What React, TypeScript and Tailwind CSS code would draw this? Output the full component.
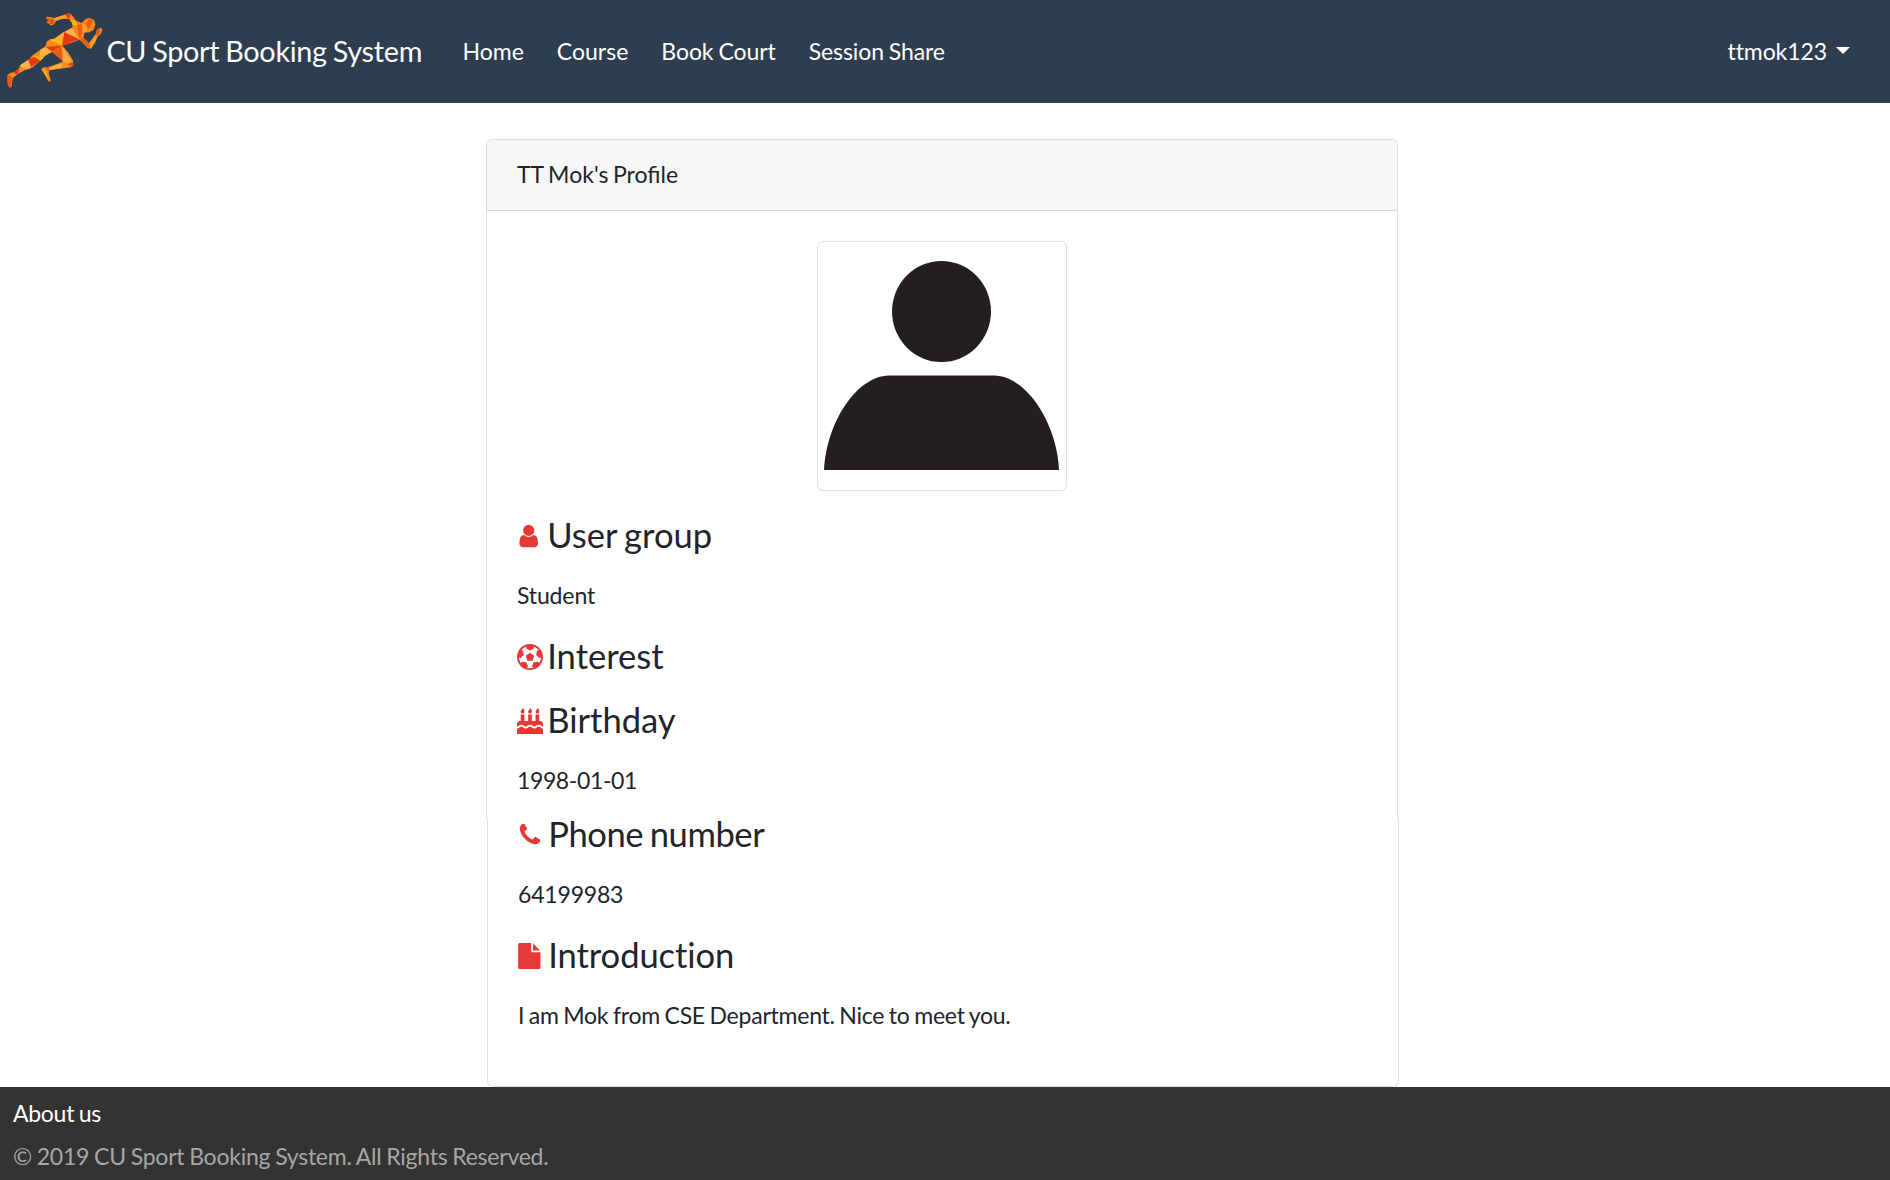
import type { ReactNode } from "react";

function RunnerLogo() {
  return (
    <svg viewBox="0 0 321 309" className="h-[103px] w-[107px] shrink-0" aria-hidden="true">
      <path
        fill="#f58a1c"
        d="M22 226L30 219L43 216L58 205L60 196L88 177L98 166L121 149L137 138L140 125L151 118L163 116L188 98L218 82L216 70L207 57L185 57L168 63L163 72L153 77L147 71L138 66L147 63L138 54L140 50L152 52L164 54L207 40L212 41L229 62L245 69L258 56L270 54L283 61L286 73L281 89L268 97L254 98L250 113L258 120L266 130L287 103L290 90L301 83L307 88L303 101L292 110L287 125L273 146L263 144L239 119L213 129L187 137L204 157L219 181L220 197L213 202L148 211L146 220L153 243L146 245L135 225L124 209L127 203L147 200L185 187L188 182L166 164L156 156L135 167L120 184L96 203L77 209L53 222L38 235L35 260L29 263L23 253Z"
      />
      <path fill="#e8380d" d="M193 96L238 118L187 137ZM207 40L213 43L206 57L196 44ZM85 178L104 171L122 182L94 201ZM137 141L184 137L156 155ZM43 216L58 205L54 221L45 222Z" />
      <path fill="#fbb04c" d="M216 84L193 96L238 118ZM163 116L187 120L193 96L178 106ZM121 149L137 142L156 155L135 167L118 170ZM187 140L214 182L189 184ZM60 196L84 180L92 203L77 209ZM150 203L186 190L184 204L148 209Z" />
      <path fill="#ee5a12" d="M184 138L188 184L157 156ZM232 75L247 72L246 98L240 117L234 100ZM266 56L279 62L266 88L258 74ZM250 113L272 137L270 146L239 119ZM24 226L37 230L34 258L29 263L23 253Z" />
      <path fill="#fdb913" d="M148 119L163 116L187 120L184 136ZM212 58L226 64L232 76L218 74ZM98 166L118 170L135 167L122 182L104 171ZM190 185L218 183L207 191ZM127 203L136 214L148 241L135 225Z" />
      <path fill="#e94e16" d="M138 54L152 56L164 60L160 73L147 71L150 63ZM202 192L219 185L220 195L212 201ZM290 92L301 84L296 104L288 104ZM137 203L148 202L146 214Z" />
      <path fill="#fa9f28" d="M288 103L292 110L274 144L270 138ZM164 54L196 44L201 52L168 62ZM246 76L256 72L262 92L250 100Z" />
    </svg>
  );
}

const icons = {
  user: "M1280 1399q0 109-62.5 187t-150.5 78h-854q-88 0-150.5-78t-62.5-187q0-85 8.5-160.5t31.5-152 58.5-131 94-89 134.5-34.5q131 128 313 128t313-128q76 0 134.5 34.5t94 89 58.5 131 31.5 152 8.5 160.5zm-256-887q0 159-112.5 271.5t-271.5 112.5-271.5-112.5-112.5-271.5 112.5-271.5 271.5-112.5 271.5 112.5 112.5 271.5z",
  ball: "M609 816l287-208 287 208-109 336h-355zm287-816q182 0 348 71t286 191 191 286 71 348-71 348-191 286-286 191-348 71-348-71-286-191-191-286-71-348 71-348 191-286 286-191 348-71zm619 1350q149-203 149-454v-3l-102 89-240-224 63-323 134 12q-150-206-389-282l53 124-287 159-287-159 53-124q-239 76-389 282l135-12 62 323-240 224-102-89v3q0 251 149 454l30-132 326 40 139 298-116 69q117 39 240 39t240-39l-115-69 138-298 326-40z",
  cake: "M1792 1408v384h-1792v-384q45 0 85-14t59-27.5 47-37.5q30-27 51.5-38t56.5-11q24 0 44 7t31 15 33 27q29 25 47 38t58 27 86 14q45 0 85-14.5t58-27 48-37.5q21-19 32.5-27t31-15 43.5-7q35 0 56.5 11t51.5 38q28 24 47 37.5t59 27.5 85 14 85-14 59-27.5 47-37.5q30-27 51.5-38t56.5-11q34 0 55.5 11t51.5 38q28 24 47 37.5t59 27.5 85 14zm0-320v192q-24 0-44-7t-31-15-33-27q-29-25-47-38t-58-27-85-14q-46 0-86 14t-58 27-47 38q-22 19-33 27t-31 15-44 7q-35 0-56.5-11t-51.5-38q-29-25-47-38t-58-27-86-14q-45 0-85 14.5t-58 27-48 37.5q-21 19-32.5 27t-31 15-43.5 7q-35 0-56.5-11t-51.5-38q-28-24-47-37.5t-59-27.5-85-14q-46 0-86 14t-58 27-47 38q-22 19-33 27t-31 15-44 7v-192q0-80 56-136t136-56h64v-448h256v448h256v-448h256v448h256v-448h256v448h64q80 0 136 56t56 136zm-1280-864q0 77-36 118.5t-92 41.5q-53 0-90.5-37.5t-37.5-90.5q0-29 9.5-51t23.5-34 31-28 31-31.5 23.5-44.5 9.5-67q38 0 83 74t45 150zm512 0q0 77-36 118.5t-92 41.5q-53 0-90.5-37.5t-37.5-90.5q0-29 9.5-51t23.5-34 31-28 31-31.5 23.5-44.5 9.5-67q38 0 83 74t45 150zm512 0q0 77-36 118.5t-92 41.5q-53 0-90.5-37.5t-37.5-90.5q0-29 9.5-51t23.5-34 31-28 31-31.5 23.5-44.5 9.5-67q38 0 83 74t45 150z",
  phone: "M1600 1240q0 27-10 70.5t-21 68.5q-21 50-122 106-94 51-186 51-27 0-53-3.5t-57.5-12.5-47-14.5-55.5-20.5-49-18q-98-35-175-83-127-79-264-216t-216-264q-48-77-83-175-3-9-18-49t-20.5-55.5-14.5-47-12.5-57.5-3.5-53q0-92 51-186 56-101 106-122 25-11 68.5-21t70.5-10q14 0 21 3 18 6 53 76 11 19 30 54t35 63.5 31 53.5q3 4 17.5 25t21.5 35.5 7 28.5q0 20-28.5 50t-62 55-62 53-28.5 46q0 9 5 22.5t8.5 20.5 14 24 11.5 19q76 137 174 235t235 174q2 1 19 11.5t24 14 20.5 8.5 22.5 5q18 0 46-28.5t53-62 55-62 50-28.5q14 0 28.5 7t35.5 21.5 25 17.5q25 15 53.5 31t63.5 35 54 30q70 35 76 53 3 7 3 21z",
  file: "M1152 512v-472q22 14 36 28l408 408q14 14 28 36h-472zm-128 32q0 40 28 68t68 28h544v1056q0 40-28 68t-68 28h-1344q-40 0-68-28t-28-68v-1600q0-40 28-68t68-28h800v544z",
};

const viewBoxes = {
  user: "-166 0 1792 1792",
  ball: "0 0 1792 1792",
  cake: "0 0 1792 1792",
  phone: "69 0 1792 1792",
  file: "117 0 1792 1792",
};

function Heading({ icon, className, children }: { icon: keyof typeof icons; className: string; children: ReactNode }) {
  return (
    <h4 className={`flex h-[41px] text-[34.56px] leading-[41px] ${className}`}>
      <svg viewBox={viewBoxes[icon]} className="mt-[9px] mr-[4.2px] size-[26px] shrink-0 fill-[#e53935]" aria-hidden="true">
        <path d={icons[icon]} />
      </svg>
      <span>{children}</span>
    </h4>
  );
}

export default function App() {
  return (
    <div className="flex h-[1180px] w-[1890px] flex-col overflow-hidden bg-white font-['Lato',sans-serif] text-[23.04px] leading-[36px] whitespace-nowrap text-[#212529]">
      <header className="flex h-[103px] shrink-0 items-start bg-[#2e3e50] text-white">
        <RunnerLogo />
        <a className="mt-[34px] -ml-[0.6px] w-[356px] text-[28.8px] leading-[34px] tracking-[-0.3px] [word-spacing:-1.1px]">
          CU Sport Booking System
        </a>
        <nav className="mt-[33px] flex gap-[33px]">
          <a>Home</a>
          <a>Course</a>
          <a className="tracking-[-0.1px] [word-spacing:-0.7px]">Book Court</a>
          <a className="tracking-[-0.12px] [word-spacing:-0.9px]">Session Share</a>
        </nav>
        <div className="mt-[33px] mr-[40px] ml-auto flex items-center gap-[9px]">
          <a className="tracking-[-0.1px]">ttmok123</a>
          <span className="-mt-[2px] border-x-7 border-t-7 border-x-transparent border-t-white" />
        </div>
      </header>

      <main className="ml-[486px] flex h-[984px] w-[913px] shrink-0 flex-col pt-[36px]">
        <section className="h-[679px] w-[912px] rounded-t-[6px] border border-b-0 border-[#dfdfdf]">
          <div className="h-[71px] rounded-t-[5px] border-b border-[#d8d8d8] bg-[#f7f7f7] px-[30px] pt-[16px] [word-spacing:-1.3px]">
            TT Mok's Profile
          </div>
          <div className="flex flex-col px-[30px] pt-[30px]">
            <div className="size-[250px] self-center rounded-[6px] border border-[#dee2e6] bg-white">
              <svg viewBox="0 0 248 248" className="size-[248px] fill-[#231f20]" aria-label="Profile photo">
                <ellipse cx="123.5" cy="69.5" rx="49.5" ry="50.5" />
                <path d="M6 228C8 182 38 134 71 133.5H176C209 134 239 182 241 228Z" />
              </svg>
            </div>
            <Heading icon="user" className="mt-[23px] [word-spacing:-1.6px]">User group</Heading>
            <p className="mt-[22px] tracking-[-0.15px]">Student</p>
            <Heading icon="ball" className="mt-[22px]">Interest</Heading>
            <Heading icon="cake" className="mt-[23px]">Birthday</Heading>
            <p className="mt-[22px] tracking-[-0.4px]">1998-01-01</p>
          </div>
        </section>
        <section className="ml-px h-[269px] w-[912px] rounded-b-[6px] border border-t-0 border-[#dfdfdf] px-[30px]">
          <Heading icon="phone" className="-mt-[5px] tracking-[-0.4px] [word-spacing:-2px]">Phone number</Heading>
          <p className="mt-[22px] tracking-[-0.2px]">64199983</p>
          <Heading icon="file" className="mt-[22px] tracking-[-0.07px]">Introduction</Heading>
          <p className="mt-[22px] tracking-[-0.25px] [word-spacing:-1.05px]">I am Mok from CSE Department. Nice to meet you.</p>
        </section>
      </main>

      <footer className="flex h-[93px] shrink-0 flex-col gap-[7px] bg-[#333333] px-[13px] pt-[8px]">
        <a className="tracking-[-0.3px] text-white [word-spacing:-0.9px]">About us</a>
        <p className="tracking-[-0.25px] text-[#a6a6a6] [word-spacing:-0.8px]">© 2019 CU Sport Booking System. All Rights Reserved.</p>
      </footer>
    </div>
  );
}
